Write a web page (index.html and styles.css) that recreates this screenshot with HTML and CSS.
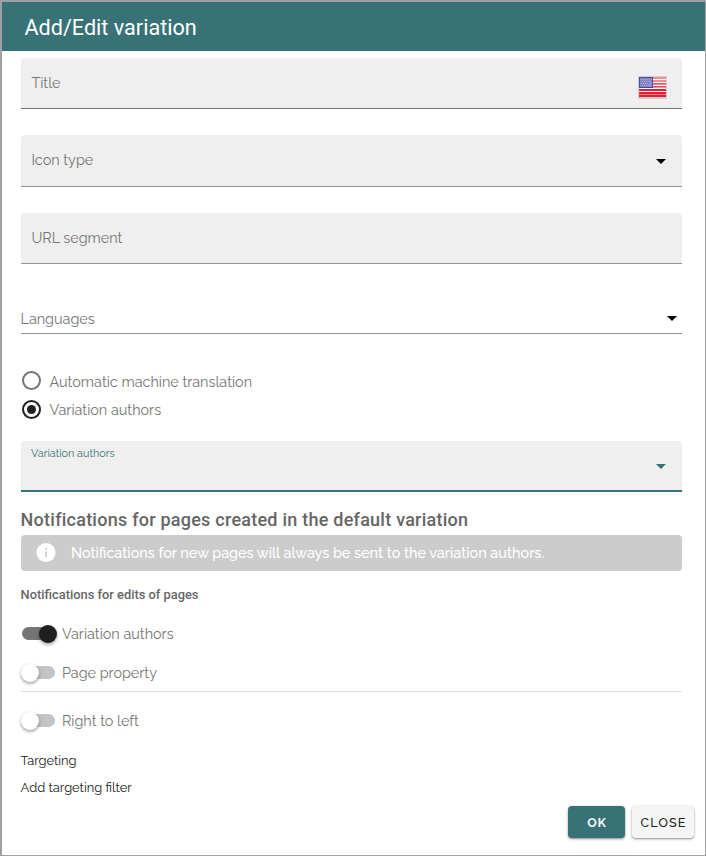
FILE: index.html
```html
<!DOCTYPE html>
<html lang="en">
<head>
<meta charset="utf-8">
<title>Add/Edit variation</title>
<link rel="stylesheet" href="styles.css">
</head>
<body>
<main class="dialog">
  <header class="dialog-header"><h1>Add/Edit variation</h1></header>
  <form class="content">
    <div class="field field-title">
      <span>Title</span>
      <svg class="flag" width="29" height="23" viewBox="0 0 29 23">
        <rect width="29" height="23" rx="1" fill="#d1cdcd"/>
        <rect x="1" y="1" width="27" height="20" fill="#fff"/>
        <path d="M1 2h27M1 5h27M1 8h27M1 11h27" stroke="#f08d97" stroke-width="2"/>
        <path d="M1 7.5h27M1 10.5h27" stroke="#e54b5a" stroke-width="1"/>
        <path d="M1 14h27M1 17h27M1 20h27" stroke="#e21f2e" stroke-width="2"/>
        <path d="M1 18.5h27" stroke="#f17d87" stroke-width="1"/>
        <rect x="1" y="1" width="14" height="11" fill="#4a4a9f"/>
        <rect x="2" y="2" width="12" height="9" fill="#8485c2"/>
        <path d="M3 3.5h11M4 5.5h10M3 7.5h11M4 9.5h10" stroke="#a9aad6" stroke-width="1" stroke-dasharray="1 1"/>
      </svg>
    </div>
    <div class="field field-icon">
      <span>Icon type</span>
      <svg class="caret" width="10" height="5" viewBox="0 0 10 5"><path d="M0 0h10L5 5z"/></svg>
    </div>
    <div class="field field-url"><span>URL segment</span></div>
    <div class="languages">
      <span>Languages</span>
      <svg class="caret" width="10" height="5" viewBox="0 0 10 5"><path d="M0 0h10L5 5z"/></svg>
    </div>
    <div class="radios">
      <div class="radio-row"><span class="radio"></span><span class="radio-label">Automatic machine translation</span></div>
      <div class="radio-row"><span class="radio checked"></span><span>Variation authors</span></div>
    </div>
    <div class="field field-authors">
      <span class="floating-label">Variation authors</span>
      <svg class="caret" width="10" height="5" viewBox="0 0 10 5"><path d="M0 0h10L5 5z"/></svg>
    </div>
    <h2>Notifications for pages created in the default variation</h2>
    <div class="banner">
      <svg width="20" height="20" viewBox="0 0 20 20"><circle cx="10" cy="9.5" r="9.5" fill="#fff"/><path d="M10 5v2M10 8.5v5.5" stroke="#ccc" stroke-width="1.8"/></svg>
      <span>Notifications for new pages will always be sent to the variation authors.</span>
    </div>
    <h3>Notifications for edits of pages</h3>
    <div class="switch-row"><span class="switch on"></span><span>Variation authors</span></div>
    <div class="switch-row property"><span class="switch"></span><span>Page property</span></div>
    <div class="switch-row rtl"><span class="switch"></span><span>Right to left</span></div>
    <div class="target targeting">Targeting</div>
    <div class="target add-filter">Add targeting filter</div>
  </form>
  <footer class="actions">
    <button class="btn ok"><span>OK</span></button>
    <button class="btn close"><span>CLOSE</span></button>
  </footer>
</main>
</body>
</html>
```

FILE: styles.css
```css
* { box-sizing: border-box; }
body { margin: 0; background: #fff; }
.dialog {
  display: flex;
  flex-direction: column;
  height: 856px;
  border: solid #a0a0a2;
  border-width: 2px 1px 1px 2px;
  font: 14.4px/20px Raleway, Lato, sans-serif;
  color: #757575;
}
.dialog span, .target { white-space: nowrap; }
.dialog-header { height: 49px; padding-left: 22.5px; background: #377276; color: #fff; }
h1 { margin: 0; font: 400 21.6px/51px Roboto, sans-serif; }
.content { padding: 7px 23px 0 19px; }
.field {
  display: flex;
  align-items: center;
  justify-content: space-between;
  height: 51px;
  padding: 0 16px 0 10.4px;
  background: #efefef;
  border-bottom: 1px solid #929292;
  border-radius: 4px 4px 0 0;
}
.field-title { border-color: #757575; padding-right: 15px; }
.flag { margin-top: 9px; }
.field-icon { height: 52px; margin-top: 26px; }
.field-icon span { margin-top: -2px; }
.field-url { margin-top: 26px; }
.caret { fill: #000; }
.field-icon .caret { margin-top: 2px; }
.languages {
  display: flex;
  align-items: center;
  justify-content: space-between;
  height: 30px;
  margin-top: 40px;
  padding-right: 5px;
  border-bottom: 1px solid #929292;
}
.languages span { margin-left: -.5px; }
.radios { padding: 37px 0 0 1px; }
.radio-row { display: flex; align-items: center; gap: 8.5px; height: 20px; }
.radio-row + .radio-row { margin-top: 9px; }
.radio-label { padding-top: 1px; }
.radio {
  display: grid;
  place-items: center;
  width: 19px;
  height: 19px;
  margin-bottom: 1px;
  border: 2px solid #757575;
  border-radius: 50%;
}
.radio.checked { border-color: #1f1f1f; }
.radio.checked::after { content: ""; width: 9px; height: 9px; border-radius: 50%; background: #1f1f1f; }
.field-authors { margin-top: 21px; padding-left: 10px; border-bottom: 2px solid #377276; color: #377276; }
.field-authors .caret { margin-top: 2px; fill: #377276; }
.floating-label { align-self: flex-start; padding-top: 3px; font-size: 10.8px; }
h2 { margin: 17px 0 5px -.4px; font: 500 18px/21px Roboto, sans-serif; letter-spacing: .24px; color: #666; white-space: nowrap; }
.banner {
  display: flex;
  align-items: center;
  gap: 15px;
  height: 36px;
  padding-left: 15px;
  background: #ccc;
  border-radius: 4px;
  color: #fff;
  font-weight: 500;
}
h3 { margin: 15px 0 21px -.4px; font: 500 12.85px/18px Roboto, sans-serif; color: #666; }
.switch-row { display: flex; align-items: center; height: 18px; }
.switch {
  display: flex;
  align-items: center;
  width: 33px;
  height: 13px;
  margin: 0 7px 1px 1px;
  border-radius: 7px;
  background: #c4c4c4;
}
.switch::before {
  content: "";
  flex-shrink: 0;
  width: 18px;
  height: 18px;
  margin-left: -1px;
  border-radius: 50%;
  background: #fff;
  box-shadow: 0 2px 3px rgba(0,0,0,.25), 0 1px 4px rgba(0,0,0,.15);
}
.switch.on { background: #757575; }
.switch.on::before { margin-left: 17px; background: #1f1f1f; }
.property { height: 28px; margin-top: 21px; padding-bottom: 9px; border-bottom: 1px solid #e0e0e0; }
.rtl { margin-top: 20px; }
.target { height: 20px; margin-left: -.4px; color: #212121; font-size: 12.9px; }
.targeting { margin-top: 21px; }
.add-filter { margin-top: 7px; }
.actions { display: flex; justify-content: flex-end; gap: 7px; padding: 8px 11px 0 0; }
.btn {
  height: 32px;
  padding: 0;
  border: 0;
  border-radius: 4px;
  font: 500 12.6px/33px Raleway, Lato, sans-serif;
  box-shadow: 0 1px 3px rgba(0,0,0,.35), 0 1px 1px rgba(0,0,0,.15);
}
.ok { width: 57px; padding-left: 1px; background: #377276; color: #f3f7f7; font-weight: 700; letter-spacing: .8px; }
.close { width: 62px; padding-left: 1px; background: #f5f5f5; color: #212121; letter-spacing: 1.1px; }
```
